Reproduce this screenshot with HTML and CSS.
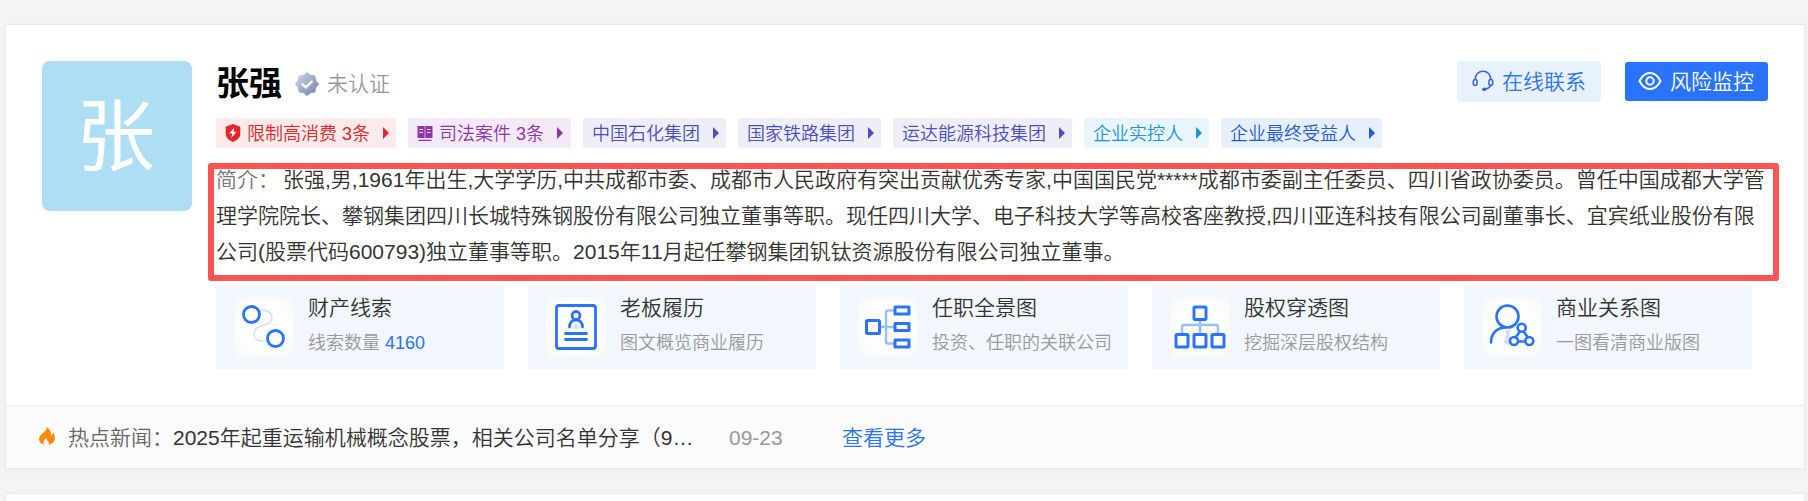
FILE: index.html
```
<!DOCTYPE html>
<html lang="zh-CN">
<head>
    <meta charset="UTF-8">
    <meta name="viewport" content="width=device-width, initial-scale=1.0">
    <title>张强</title>
    <link rel="stylesheet" href="styles.css">
</head>
<body>
    <div class="card">
        <div class="profile">
            <div class="avatar">张</div>
            <div class="info">
                <div class="head">
                    <h1 class="name">张强</h1>
                    <svg class="badge" viewBox="0 0 24 24">
                        <defs>
                            <linearGradient id="badge" x1="0" y1="0" x2="1" y2="1">
                                <stop offset="0.1" stop-color="#c3d0de"/>
                                <stop offset="0.9" stop-color="#7d8bb3"/>
                            </linearGradient>
                        </defs>
                        <path fill="url(#badge)" stroke="url(#badge)" stroke-width="2" stroke-linejoin="round" d="M12 1.200l3 2.600 4.400.8.800 4.400 2.600 3-2.600 3-.8 4.400-4.400.8-3 2.600-3-2.600-4.400-.8-.8-4.400-2.600-3 2.600-3 .8-4.400 4.400-.8z"/>
                        <path fill="none" stroke="#fff" stroke-width="2.4" d="M6.8 11.6l4 3.8 6.6-6.4"/>
                    </svg>
                    <span class="status">未认证</span>
                    <div class="actions">
                        <a class="btn contact">
                            <svg width="22" height="22" viewBox="0 0 22 22" fill="none" stroke="#3a62e0" stroke-width="1.5">
                                <path d="M3.2 9.5C3.2 4.500 6.500 1.300 11 1.300s7.800 3.200 7.800 8.200"/>
                                <rect x="1.300" y="9.500" width="3.800" height="6" rx="1.900"/>
                                <rect x="16.900" y="9.500" width="3.800" height="6" rx="1.900"/>
                                <path d="M18.500 15.500c-.8 2-2.700 3.300-5 3.600"/>
                                <ellipse cx="12.300" cy="19.200" rx="1.500" ry="1" fill="#3a62e0"/>
                            </svg>
                            <span>在线联系</span>
                        </a>
                        <a class="btn monitor">
                            <svg width="24" height="20" viewBox="0 0 24 20" fill="none" stroke="#fff" stroke-width="2">
                                <path stroke-linejoin="round" d="M1.500 10C4 5 7.500 2 12 2s8 3 10.500 8C20 15 16.500 18 12 18S4 15 1.500 10z"/>
                                <circle cx="12" cy="10" r="3.700"/>
                            </svg>
                            <span>风险监控</span>
                        </a>
                    </div>
                </div>

                <div class="tags">
                    <a class="tag red">
                        <svg viewBox="0 0 16 18">
                            <path fill="#e62629" d="M8 0l7.300 2.800v7c0 3.800-3 6.500-7.300 8.200C3.700 16.300.7 13.600.7 9.800v-7z"/>
                            <path fill="#fff" d="M9.300 3.500L4.300 9.600h3L6.300 14l5.200-6.200H8.400z"/>
                        </svg>
                        <span>限制高消费 3条</span>
                    </a>
                    <a class="tag purple">
                        <svg viewBox="0 0 16 18">
                            <path fill="#8f34ad" d="M.5 2h7.200v12H.5zM8.300 2H15.500v12H8.300zM1.500 15.800h13v1.200h-13z"/>
                            <path stroke="#f4eaf7" d="M2.500 5.500h3.500M2.500 8.500h3.500M10 5.500h3.500M10 8.500h3.500"/>
                        </svg>
                        <span>司法案件 3条</span>
                    </a>
                    <a class="tag indigo"><span>中国石化集团</span></a>
                    <a class="tag indigo"><span>国家铁路集团</span></a>
                    <a class="tag indigo"><span>运达能源科技集团</span></a>
                    <a class="tag cyan"><span>企业实控人</span></a>
                    <a class="tag blue"><span>企业最终受益人</span></a>
                </div>

                <p class="intro">
                    <span class="label">简介：</span>张强,男,1961年出生,大学学历,中共成都市委、成都市人民政府有突出贡献优秀专家,中国国民党*****成都市委副主任委员、四川省政协委员。曾任中国成都大学管<br>理学院院长、攀钢集团四川长城特殊钢股份有限公司独立董事等职。现任四川大学、电子科技大学等高校客座教授,四川亚连科技有限公司副董事长、宜宾纸业股份有限<br>公司(股票代码600793)独立董事等职。2015年11月起任攀钢集团钒钛资源股份有限公司独立董事。
                </p>

                <div class="features">
                    <a class="feature">
                        <svg viewBox="0 0 60 60" fill="none" stroke="#2a73ff" stroke-width="2.800">
                            <path stroke="#cfe0ff" stroke-width="1.500" d="M26 13.500c7-1 12 2.500 12 7.500 0 9-18 5-18 16 0 5 5 8.500 12 6.500"/>
                            <circle cx="17.500" cy="17.500" r="8"/>
                            <circle cx="41.500" cy="41.500" r="8"/>
                        </svg>
                        <div>
                            <h3>财产线索</h3>
                            <p>线索数量 <em>4160</em></p>
                        </div>
                    </a>
                    <a class="feature">
                        <svg viewBox="0 0 60 60" fill="none" stroke="#2a73ff" stroke-width="2.800" stroke-linecap="round">
                            <rect x="10.500" y="8.500" width="39" height="43" rx="2.500"/>
                            <circle cx="30" cy="18.500" r="4"/>
                            <path d="M23.500 30c0-4 2.500-7 6.500-7s6.500 3 6.500 7M19.500 36.500h21M19.500 42.500h21"/>
                            <path stroke="#cfe0ff" stroke-width="2.500" d="M30 27v4"/>
                        </svg>
                        <div>
                            <h3>老板履历</h3>
                            <p>图文概览商业履历</p>
                        </div>
                    </a>
                    <a class="feature">
                        <svg viewBox="0 0 60 60" fill="none" stroke="#2a73ff" stroke-width="3" stroke-linejoin="round">
                            <path stroke="#9dbfff" stroke-width="2.500" d="M22 30h14M36 13.500h-6q-2 0-2 2v29q0 2 2 2h6"/>
                            <rect x="8.500" y="23.500" width="13" height="13" rx="1"/>
                            <path d="M37 10h14v7H37zM37 26.500h14v7H37zM37 43h14v7H37z"/>
                        </svg>
                        <div>
                            <h3>任职全景图</h3>
                            <p>投资、任职的关联公司</p>
                        </div>
                    </a>
                    <a class="feature">
                        <svg viewBox="0 0 60 60" fill="none" stroke="#2a73ff" stroke-width="3">
                            <path stroke="#9dbfff" stroke-width="2.500" d="M30 23v13M12 36v-6q0-2 2-2h32q2 0 2 2v6"/>
                            <rect x="24" y="10" width="12" height="12.500" rx="1"/>
                            <rect x="6" y="37.500" width="12" height="12.500" rx="1"/>
                            <rect x="24" y="37.500" width="12" height="12.500" rx="1"/>
                            <rect x="42" y="37.500" width="12" height="12.500" rx="1"/>
                        </svg>
                        <div>
                            <h3>股权穿透图</h3>
                            <p>挖掘深层股权结构</p>
                        </div>
                    </a>
                    <a class="feature">
                        <svg viewBox="0 0 60 60" fill="none" stroke="#2a73ff" stroke-width="2.600" stroke-linecap="round">
                            <path fill="#cfe0ff" stroke="none" d="M23.500 33h5l-1 4 1.500 8-3 3.500-4-3.500 2.500-8z"/>
                            <circle cx="25.500" cy="19.500" r="11"/>
                            <path d="M9 45.500c0-8 5-14.500 13.500-15"/>
                            <path d="M37.800 34.500l-4.300 6M41.700 34.500l4 6M36.500 44.500h6.500"/>
                            <circle cx="39.700" cy="30.800" r="4"/>
                            <circle cx="32" cy="44" r="4"/>
                            <circle cx="47.300" cy="44" r="4"/>
                        </svg>
                        <div>
                            <h3>商业关系图</h3>
                            <p>一图看清商业版图</p>
                        </div>
                    </a>
                </div>
                <div class="highlight"></div>
            </div>
        </div>

        <div class="news">
            <svg class="flame" viewBox="0 0 16 18">
                <path fill="#ff8a0f" d="M7.500 0c.5 2.500-1 4-3.500 6-2.200 1.800-4 3.500-4 6 0 2.600 1.700 4.700 5 5.800C4 15.500 4.500 13 7.300 11 7.300 13 8.500 13.500 9.500 15c.6 1 .5 2 0 2.900 4-.8 6.300-3.400 6.300-6.700 0-2.200-.3-4.200-1.300-5.700-.5 1.500-1.500 2.300-2.500 2.500C12.300 4.500 10.500 1.500 7.500 0z"/>
            </svg>
            <span class="news-label">热点新闻：</span>
            <a class="news-title">2025年起重运输机械概念股票，相关公司名单分享（9…</a>
            <span class="date">09-23</span>
            <a class="more">查看更多</a>
        </div>
    </div>
    <div class="card next"></div>
</body>
</html>
```
FILE: styles.css
```
* {
    box-sizing: border-box;
}
body {
    margin: 0;
    padding: 24px 3px 0 5px;
    background-color: #f4f4f4;
    font-family: "Liberation Sans", "Noto Sans CJK SC", sans-serif;
    font-size: 21px;
    font-weight: 350;
    color: #333;
    white-space: nowrap;
}
h1, h3, p {
    margin: 0;
}
.card {
    background-color: #fff;
    border: 1px solid #e9e9e9;
    box-shadow: 0 2px 12px rgba(0, 0, 0, 0.03);
}
.next {
    margin-top: 24px;
    height: 8px;
    border-bottom: none;
}
.profile {
    display: flex;
    gap: 24px;
    height: 380px;
    padding: 36px 51px 0 36px;
}
.avatar {
    flex-shrink: 0;
    width: 150px;
    height: 150px;
    padding-right: 3px;
    border-radius: 8px;
    background-color: #addef4;
    color: #fff;
    font-size: 79px;
    font-weight: 400;
    line-height: 153px;
    text-align: center;
}
.info {
    position: relative;
    width: 1536px;
}

/* name row */
.head {
    display: flex;
    align-items: center;
    height: 42px;
    margin-bottom: 15px;
}
.name {
    padding-top: 3px;
    color: #000;
    font-size: 33px;
    font-weight: 700;
    line-height: 42px;
}
.badge {
    width: 24px;
    height: 24px;
    margin: 4px 8px 0 13px;
}
.status {
    color: #999;
}
.actions {
    display: flex;
    align-items: center;
    gap: 24px;
    margin: 0 -16px 2px auto;
}
.btn {
    display: flex;
    align-items: center;
    gap: 8px;
    border-radius: 3px;
}
.btn span {
    padding-bottom: 3px;
}
.contact {
    width: 144px;
    height: 41px;
    padding-left: 15px;
    background-color: #e8f2ff;
    color: #2a73ff;
}
.monitor {
    width: 143px;
    height: 39px;
    padding-left: 13px;
    background-color: #2a73ff;
    color: #fff;
}

/* tags */
.tags {
    display: flex;
    gap: 12px;
    margin-bottom: 14px;
}
.tag {
    display: flex;
    align-items: center;
    height: 30px;
    padding: 0 7px 0 9px;
    border-radius: 3px;
    font-size: 18px;
}
.tag span {
    padding-bottom: 3px;
}
.tag svg {
    width: 16px;
    height: 18px;
    margin-right: 6px;
}
.tag::after {
    content: "";
    margin-left: 13px;
    border-left: 6px solid;
    border-top: 6px solid transparent;
    border-bottom: 6px solid transparent;
}
.red {
    background-color: #fdeaea;
    color: #e62629;
}
.purple {
    padding-right: 8px;
    background-color: #f4eaf7;
    color: #8f34ad;
}
.indigo {
    background-color: #eeeef9;
    color: #4a4ec4;
}
.cyan {
    background-color: #e8f5fc;
    color: #1c93dc;
}
.blue {
    background-color: #e8effc;
    color: #1d5bdc;
}

.intro {
    line-height: 36px;
    height: 108px;
    margin-bottom: 15px;
}
.label {
    color: #777;
    margin-right: 4px;
}
/* red frame around the intro */
.highlight {
    position: absolute;
    top: 102px;
    left: -8px;
    width: 1571px;
    height: 118px;
    border: 6px solid #fd5353;
    border-radius: 3px;
}

/* feature blocks */
.features {
    display: flex;
    gap: 24px;
}
.feature {
    display: flex;
    align-items: center;
    gap: 14px;
    width: 288px;
    height: 84px;
    padding-left: 18px;
    background-color: #f2f6ff;
}
.feature svg {
    width: 60px;
    height: 60px;
    border-radius: 6px;
    background: radial-gradient(#fff 50%, #f7f7f8);
}
.feature h3 {
    margin-top: -4px;
    font-size: 21px;
    font-weight: inherit;
    line-height: 36px;
}
.feature p {
    color: #999;
    font-size: 18px;
    line-height: 34px;
}
.feature em {
    color: #2a73ff;
    font-style: normal;
}

/* news bar */
.news {
    display: flex;
    align-items: center;
    height: 63px;
    padding: 0 0 2px 33px;
    border-top: 1px solid #ebebeb;
    background-color: #fbfbfb;
}
.flame {
    width: 16px;
    height: 18px;
    margin-right: 13px;
}
.news-label {
    color: #666;
}
.news-title {
    width: 556px;
}
.date {
    width: 113px;
    padding-top: 3px;
    color: #999;
}
.more {
    color: #2a73ff;
}
```
